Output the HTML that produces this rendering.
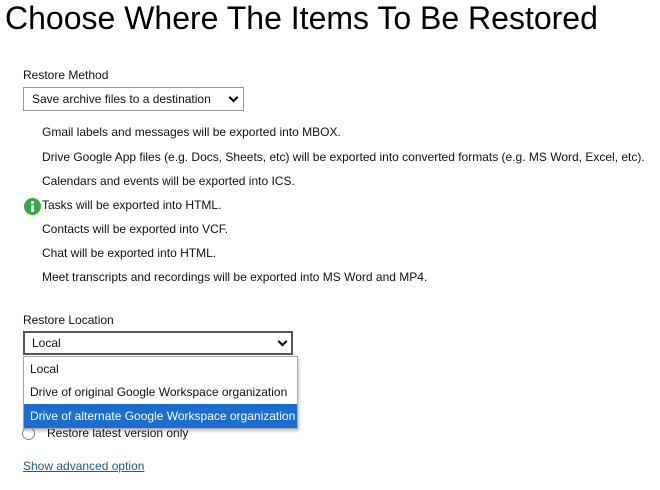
<!DOCTYPE html>
<html><head><style>
body{margin:0;width:660px;height:490px;background:#fff;font-family:"Liberation Sans",sans-serif;color:#111;position:relative;overflow:hidden}
.a{position:absolute;white-space:nowrap;font-size:12px}
h1{position:absolute;left:5px;top:0px;margin:0;font-weight:normal;font-size:32px;letter-spacing:0px;white-space:nowrap;color:#000}
.sel{position:absolute;box-sizing:border-box;background:#fff;font-size:12px}
.chev{position:absolute;width:5px;height:5px;border-right:2px solid #000;border-bottom:2px solid #000;transform:rotate(45deg)}
</style></head><body>
<h1>Choose Where The Items To Be Restored</h1>
<div class="a" style="left:23px;top:68px">Restore Method</div>
<div class="sel" style="left:23px;top:87px;width:221px;height:24px;border:1px solid #9a9a9a">
<span style="position:absolute;left:8px;top:4px">Save archive files to a destination</span>
<div class="chev" style="left:206px;top:6px"></div></div>
<div class="a" style="left:42px;top:125px">Gmail labels and messages will be exported into MBOX.</div>
<div class="a" style="left:42px;top:150px">Drive Google App files (e.g. Docs, Sheets, etc) will be exported into converted formats (e.g. MS Word, Excel, etc).</div>
<div class="a" style="left:42px;top:174px">Calendars and events will be exported into ICS.</div>
<svg style="position:absolute;left:24px;top:198px" width="17" height="17" viewBox="0 0 17 17"><circle cx="8.5" cy="8.5" r="8.5" fill="#3aa845"/><circle cx="8.5" cy="4.5" r="1.6" fill="#fff"/><rect x="7" y="7" width="3" height="7" rx="1" fill="#fff"/></svg>
<div class="a" style="left:42px;top:198px">Tasks will be exported into HTML.</div>
<div class="a" style="left:42px;top:222px">Contacts will be exported into VCF.</div>
<div class="a" style="left:42px;top:246px">Chat will be exported into HTML.</div>
<div class="a" style="left:42px;top:270px">Meet transcripts and recordings will be exported into MS Word and MP4.</div>
<div class="a" style="left:23px;top:313px">Restore Location</div>
<div style="position:absolute;left:22px;top:427px;width:13px;height:13px;border:1px solid #888;border-radius:50%;box-sizing:border-box"></div>
<div class="a" style="left:47px;top:426px">Restore latest version only</div>
<div class="sel" style="left:23px;top:331px;width:270px;height:24px;border:2px solid #555">
<span style="position:absolute;left:7px;top:3px">Local</span>
<div class="chev" style="left:254px;top:5px"></div></div>
<div style="position:absolute;left:23px;top:356px;width:275px;height:73px;box-sizing:border-box;border:1px solid #aaa;background:#fff;box-shadow:1px 2px 3px rgba(0,0,0,.25);font-size:12px">
<div style="position:absolute;left:6px;top:5px">Local</div>
<div style="position:absolute;left:6px;top:28px">Drive of original Google Workspace organization</div>
<div style="position:absolute;left:0;top:47px;width:273px;height:24px;background:#1c6dd0;color:#fff"><span style="position:absolute;left:6px;top:5px">Drive of alternate Google Workspace organization</span></div>
</div>
<div class="a" style="left:23px;top:459px;color:#1d5f86;text-decoration:underline">Show advanced option</div>
</body></html>
